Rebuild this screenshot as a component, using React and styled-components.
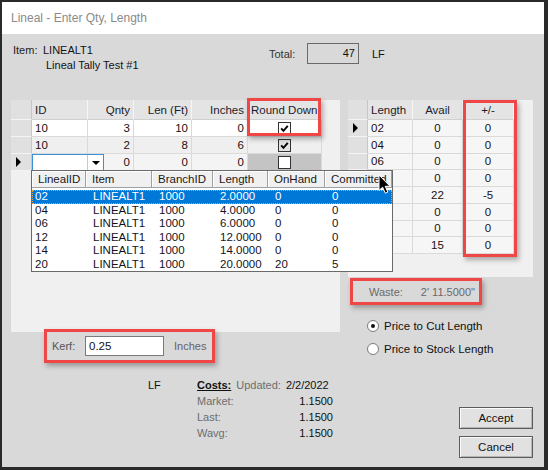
import React from "react";
import styled, { createGlobalStyle } from "styled-components";

const GlobalStyle = createGlobalStyle`
  html, body {
    margin: 0;
    padding: 0;
  }
  body {
    font-family: "Liberation Sans", Arial, sans-serif;
    font-size: 11px;
    color: #111;
  }
`;

const leftCols = [
  { key: "id", title: "ID", width: 56, align: "left" },
  { key: "qnty", title: "Qnty", width: 46, align: "right" },
  { key: "len", title: "Len (Ft)", width: 58, align: "right" },
  { key: "inches", title: "Inches", width: 56, align: "right" },
  { key: "round", title: "Round Down", width: 74, align: "left" },
];

const leftRows = [
  { id: "10", qnty: 3, len: 10, inches: 0, round: true, bg: "#ffffff", boxBg: "#ffffff" },
  { id: "10", qnty: 2, len: 8, inches: 6, round: true, bg: "#efefef", boxBg: "#e2e2e2" },
  { id: "", qnty: 0, len: 0, inches: 0, round: false, bg: "#f4f4f4", boxBg: "#ffffff", current: true, editing: true },
];

const stockRows = [
  { length: "02", avail: 0, diff: 0 },
  { length: "04", avail: 0, diff: 0 },
  { length: "06", avail: 0, diff: 0 },
  { length: "08", avail: 0, diff: 0 },
  { length: "10", avail: 22, diff: -5 },
  { length: "12", avail: 0, diff: 0 },
  { length: "14", avail: 0, diff: 0 },
  { length: "20", avail: 15, diff: 0 },
];

const popupCols = [
  { title: "LinealID", width: 54, pad: 3 },
  { title: "Item", width: 66, pad: 7 },
  { title: "BranchID", width: 61, pad: 7 },
  { title: "Length", width: 55, pad: 7 },
  { title: "OnHand", width: 57, pad: 7 },
  { title: "Committed", width: 0, pad: 7 },
];

const popupRows = [
  ["02", "LINEALT1", "1000", "2.0000", "0", "0"],
  ["04", "LINEALT1", "1000", "4.0000", "0", "0"],
  ["06", "LINEALT1", "1000", "6.0000", "0", "0"],
  ["12", "LINEALT1", "1000", "12.0000", "0", "0"],
  ["14", "LINEALT1", "1000", "14.0000", "0", "0"],
  ["20", "LINEALT1", "1000", "20.0000", "20", "5"],
];

export default function App() {
  return (
    <>
      <GlobalStyle />
      <Window>
        <TitleBar>Lineal - Enter Qty, Length</TitleBar>
        <Body>
          <Header>
            <ItemBlock>
              <Line>
                <ItemLabel>Item:</ItemLabel>
                LINEALT1
              </Line>
              <Line indent>Lineal Tally Test #1</Line>
            </ItemBlock>
            <TotalGroup>
              <TotalLabel>Total:</TotalLabel>
              <TotalBox>47</TotalBox>
              <Unit>LF</Unit>
            </TotalGroup>
          </Header>

          <Middle>
            <LeftCol>
              <LeftPanel>
                <GridRow height={20}>
                  <RowHead />
                  {leftCols.map((c) => (
                    <HeadCell key={c.key} width={c.width} align={c.align}>
                      {c.title}
                    </HeadCell>
                  ))}
                </GridRow>
                {leftRows.map((r, i) => (
                  <GridRow key={i} height={17}>
                    <RowHead>{r.current && <Pointer />}</RowHead>
                    <Cell width={56} align="left" bg={r.bg}>
                      {r.editing ? (
                        <Editor>
                          <EditorArrow>
                            <DownTri />
                          </EditorArrow>
                        </Editor>
                      ) : (
                        r.id
                      )}
                    </Cell>
                    <Cell width={46} align="right" bg={r.bg}>{r.qnty}</Cell>
                    <Cell width={58} align="right" bg={r.bg}>{r.len}</Cell>
                    <Cell width={56} align="right" bg={r.bg}>{r.inches}</Cell>
                    <Cell width={74} align="center" bg={r.editing ? "#c4c4c4" : r.bg}>
                      <CheckBox bg={r.boxBg}>
                        {r.round && (
                          <svg width="11" height="11" viewBox="0 0 11 11">
                            <path d="M2.2 5.4 L4.4 7.8 L8.8 2.8" fill="none" stroke="#000" strokeWidth="1.9" />
                          </svg>
                        )}
                      </CheckBox>
                    </Cell>
                  </GridRow>
                ))}
                <Callout left={236} top={-2} width={74} height={38} />

                <Popup>
                  <PopupHead>
                    {popupCols.map((c) => (
                      <PopupHeadCell key={c.title} width={c.width}>
                        {c.title}
                      </PopupHeadCell>
                    ))}
                  </PopupHead>
                  <PopupList>
                    {popupRows.map((row, i) => (
                      <PopupRow key={i} selected={i === 0}>
                        {row.map((v, j) => (
                          <PopupCell key={j} width={popupCols[j].width} pad={popupCols[j].pad}>
                            {v}
                          </PopupCell>
                        ))}
                      </PopupRow>
                    ))}
                  </PopupList>
                </Popup>
                <Cursor>
                  <svg width="14" height="21" viewBox="0 0 14 21">
                    <path
                      d="M1 1 L1 16.5 L4.6 13.2 L7.3 19.2 L9.8 18.1 L7.2 12.3 L12 12.3 Z"
                      fill="#000"
                      stroke="#fff"
                      strokeWidth="1"
                      strokeLinejoin="round"
                    />
                  </svg>
                </Cursor>
              </LeftPanel>

              <KerfBox>
                <KerfLabel>Kerf:</KerfLabel>
                <KerfInput>0.25</KerfInput>
                <KerfUnit>Inches</KerfUnit>
              </KerfBox>
            </LeftCol>

            <RightCol>
              <RightPanel>
                <GridRow height={20}>
                  <RowHead width={20} />
                  <HeadCell width={45} align="left">Length</HeadCell>
                  <HeadCell width={50} align="center">Avail</HeadCell>
                  <HeadCell width={51} align="center">+/-</HeadCell>
                </GridRow>
                {stockRows.map((r, i) => (
                  <GridRow key={i} height={16.75}>
                    <RowHead width={20}>{i === 0 && <Pointer />}</RowHead>
                    <Cell width={45} align="left" bg="#f6f6f6">{r.length}</Cell>
                    <Cell width={50} align="center" bg="#f6f6f6">{r.avail}</Cell>
                    <Cell width={51} align="center" bg="#f6f6f6">{r.diff}</Cell>
                  </GridRow>
                ))}
                <Callout left={115} top={0} width={54} height={157} />
              </RightPanel>

              <WasteBox>
                <span>Waste:</span>
                <WasteValue>2' 11.5000"</WasteValue>
              </WasteBox>

              <RadioList>
                <RadioRow>
                  <Radio checked />
                  Price to Cut Length
                </RadioRow>
                <RadioRow>
                  <Radio />
                  Price to Stock Length
                </RadioRow>
              </RadioList>
            </RightCol>
          </Middle>

          <Bottom>
            <LfLabel>LF</LfLabel>
            <Costs>
              <CostsHead>
                <CostsTitle>Costs:</CostsTitle>
                <Muted>Updated:</Muted>
                <span>2/2/2022</span>
              </CostsHead>
              <CostRow>
                <Muted>Market:</Muted>
                <span>1.1500</span>
              </CostRow>
              <CostRow>
                <Muted>Last:</Muted>
                <span>1.1500</span>
              </CostRow>
              <CostRow>
                <Muted>Wavg:</Muted>
                <span>1.1500</span>
              </CostRow>
            </Costs>
            <Buttons>
              <Button>Accept</Button>
              <Button>Cancel</Button>
            </Buttons>
          </Bottom>
        </Body>
      </Window>
    </>
  );
}

const Window = styled.div`
  width: 548px;
  height: 470px;
  box-sizing: border-box;
  border-style: solid;
  border-color: #2a2a2a;
  border-width: 2px 4px 3px 2px;
  display: flex;
  flex-direction: column;
  background: #d9d9d9;
  overflow: hidden;
`;

const TitleBar = styled.div`
  flex: none;
  height: 32px;
  line-height: 32px;
  padding-left: 9px;
  background: #ffffff;
  color: #8a8a8a;
  font-size: 12px;
`;

const Body = styled.div`
  flex: 1;
  display: flex;
  flex-direction: column;
  padding: 0 11px 0 9px;
`;

const Header = styled.div`
  flex: none;
  height: 66px;
  box-sizing: border-box;
  padding-top: 9px;
  display: flex;
  align-items: flex-start;
`;

const ItemBlock = styled.div`
  width: 256px;
  margin-left: 2px;
`;

const Line = styled.div`
  line-height: 15px;
  padding-left: ${({ indent }) => (indent ? "33px" : "0")};
`;

const ItemLabel = styled.span`
  display: inline-block;
  width: 30px;
  color: #222;
`;

const TotalGroup = styled.div`
  display: flex;
  align-items: center;
`;

const TotalLabel = styled.span`
  width: 38px;
  color: #333;
`;

const TotalBox = styled.div`
  width: 52px;
  height: 21px;
  box-sizing: border-box;
  border: 1px solid #6a6a6a;
  text-align: right;
  padding-right: 3px;
  line-height: 19px;
`;

const Unit = styled.span`
  margin-left: 13px;
`;

const Middle = styled.div`
  flex: none;
  height: 270px;
  display: flex;
  gap: 8px;
`;

const LeftCol = styled.div`
  width: 329px;
  display: flex;
  flex-direction: column;
`;

const LeftPanel = styled.div`
  position: relative;
  height: 232px;
  background: #f0f0f0;
`;

const RightCol = styled.div`
  width: 185px;
  display: flex;
  flex-direction: column;
`;

const RightPanel = styled.div`
  position: relative;
  height: 177px;
  background: #f0f0f0;
`;

const GridRow = styled.div`
  display: flex;
  height: ${({ height }) => height}px;
`;

const RowHead = styled.div`
  width: ${({ width }) => width || 21}px;
  flex: none;
  box-sizing: border-box;
  background: #e0e0e0;
  border-right: 1px solid #c6c6c6;
  border-bottom: 1px solid #f4f4f4;
  display: flex;
  align-items: center;
  padding-left: 5px;
`;

const Pointer = styled.span`
  width: 0;
  height: 0;
  border-left: 5px solid #000;
  border-top: 5px solid transparent;
  border-bottom: 5px solid transparent;
`;

const HeadCell = styled.div`
  width: ${({ width }) => width}px;
  flex: none;
  box-sizing: border-box;
  background: #e4e4e4;
  border-right: 1px solid #f6f6f6;
  border-bottom: 1px solid #d0d0d0;
  display: flex;
  align-items: center;
  justify-content: ${({ align }) =>
    align === "right" ? "flex-end" : align === "center" ? "center" : "flex-start"};
  padding: 0 3px;
  font-size: 11.5px;
  color: #1c1c2c;
  white-space: nowrap;
`;

const Cell = styled.div`
  position: relative;
  width: ${({ width }) => width}px;
  flex: none;
  box-sizing: border-box;
  background: ${({ bg }) => bg};
  border-right: 1px solid #dadada;
  border-bottom: 1px solid #dadada;
  display: flex;
  align-items: center;
  justify-content: ${({ align }) =>
    align === "right" ? "flex-end" : align === "center" ? "center" : "flex-start"};
  padding: 0 3px;
  font-size: 11.5px;
  color: #1a1010;
`;

const Editor = styled.div`
  position: absolute;
  left: 0;
  top: 0;
  width: 72px;
  height: 17px;
  box-sizing: border-box;
  background: #fff;
  border: 1px solid #3d8fd8;
  z-index: 2;
  display: flex;
  justify-content: flex-end;
`;

const EditorArrow = styled.div`
  width: 15px;
  border-left: 1px solid #c8c8c8;
  display: flex;
  align-items: center;
  justify-content: center;
`;

const DownTri = styled.span`
  width: 0;
  height: 0;
  border-top: 4px solid #000;
  border-left: 4px solid transparent;
  border-right: 4px solid transparent;
`;

const CheckBox = styled.span`
  width: 13px;
  height: 13px;
  box-sizing: border-box;
  border: 1px solid #333;
  background: ${({ bg }) => bg};
  display: flex;
  align-items: center;
  justify-content: center;
`;

const Callout = styled.div`
  position: absolute;
  left: ${({ left }) => left}px;
  top: ${({ top }) => top}px;
  width: ${({ width }) => width}px;
  height: ${({ height }) => height}px;
  box-sizing: border-box;
  border: 3px solid #ef4646;
  box-shadow: 2px 3px 5px rgba(0, 0, 0, 0.3);
  pointer-events: none;
  z-index: 3;
`;

const Popup = styled.div`
  position: absolute;
  left: 20px;
  top: 70px;
  width: 362px;
  height: 102px;
  box-sizing: border-box;
  border: 1px solid #6a6a6a;
  background: #fff;
  z-index: 10;
`;

const PopupHead = styled.div`
  display: flex;
  height: 17px;
`;

const PopupHeadCell = styled.div`
  flex: ${({ width }) => (width ? `0 0 ${width}px` : "1")};
  box-sizing: border-box;
  background: #f0f0f0;
  border-right: 1px solid #a0a0a0;
  border-bottom: 1px solid #a0a0a0;
  box-shadow: inset 1px 1px #ffffff;
  padding-left: 6px;
  line-height: 16px;
  font-size: 11.5px;
  color: #1a1a1a;
  white-space: nowrap;
`;

const PopupList = styled.div`
  padding-top: 2px;
`;

const PopupRow = styled.div`
  display: flex;
  height: 13.5px;
  line-height: 13.5px;
  background: ${({ selected }) => (selected ? "#0078d7" : "transparent")};
  color: ${({ selected }) => (selected ? "#ffffff" : "#14141e")};
  outline: ${({ selected }) => (selected ? "1px dotted #f2a33a" : "none")};
  outline-offset: -1px;
`;

const PopupCell = styled.div`
  flex: ${({ width }) => (width ? `0 0 ${width}px` : "1")};
  box-sizing: border-box;
  padding-left: ${({ pad }) => pad}px;
  font-size: 11.5px;
  white-space: nowrap;
`;

const Cursor = styled.div`
  position: absolute;
  left: 367px;
  top: 74px;
  z-index: 11;
  line-height: 0;
`;

const KerfBox = styled.div`
  margin: -3px 0 0 33px;
  width: 171px;
  height: 34px;
  box-sizing: border-box;
  border: 3px solid #ef4646;
  box-shadow: 2px 3px 5px rgba(0, 0, 0, 0.3);
  display: flex;
  align-items: center;
  padding-left: 5px;
  position: relative;
  z-index: 3;
`;

const KerfLabel = styled.span`
  width: 33px;
  color: #555;
`;

const KerfInput = styled.div`
  width: 79px;
  height: 20px;
  box-sizing: border-box;
  border: 1px solid #7a7a7a;
  background: #fff;
  padding-left: 3px;
  line-height: 18px;
  font-size: 11.5px;
`;

const KerfUnit = styled.span`
  margin-left: 10px;
  color: #6a5f6a;
`;

const WasteBox = styled.div`
  margin: 1px 0 0 2px;
  width: 132px;
  height: 27px;
  box-sizing: border-box;
  border: 3px solid #ef4646;
  box-shadow: 2px 3px 5px rgba(0, 0, 0, 0.3);
  display: flex;
  align-items: center;
  padding-left: 16px;
  color: #6a6a6a;
`;

const WasteValue = styled.span`
  margin-left: 18px;
`;

const RadioList = styled.div`
  margin: 9px 0 0 19px;
  display: flex;
  flex-direction: column;
`;

const RadioRow = styled.div`
  height: 23px;
  display: flex;
  align-items: center;
  gap: 5px;
  font-size: 11.5px;
  color: #111;
`;

const Radio = styled.span`
  width: 12px;
  height: 12px;
  box-sizing: border-box;
  border-radius: 50%;
  border: 1px solid #7a7a7a;
  background: #fff;
  display: flex;
  align-items: center;
  justify-content: center;
  &::after {
    content: "";
    width: 4px;
    height: 4px;
    border-radius: 50%;
    background: ${({ checked }) => (checked ? "#111" : "transparent")};
  }
`;

const Bottom = styled.div`
  flex: 1;
  display: flex;
  align-items: flex-start;
  padding-top: 7px;
`;

const LfLabel = styled.div`
  margin-left: 137px;
  width: 49px;
  line-height: 16px;
`;

const Costs = styled.div`
  width: 136px;
`;

const CostsHead = styled.div`
  display: flex;
  gap: 5px;
  line-height: 16px;
  white-space: nowrap;
`;

const CostsTitle = styled.span`
  font-weight: bold;
  text-decoration: underline;
`;

const Muted = styled.span`
  color: #6d6d6d;
`;

const CostRow = styled.div`
  display: flex;
  justify-content: space-between;
  line-height: 16px;
`;

const Buttons = styled.div`
  margin: 30px 0 0 auto;
  display: flex;
  flex-direction: column;
  gap: 7px;
`;

const Button = styled.button`
  width: 74px;
  height: 22px;
  box-sizing: border-box;
  border: 1px solid #5c5c5c;
  box-shadow: inset 1px 1px #fbfbfb, inset -1px -1px #b5b5b5;
  background: #e1e1e1;
  font-family: "Liberation Sans", Arial, sans-serif;
  font-size: 11.5px;
  color: #111;
  padding: 0;
`;
